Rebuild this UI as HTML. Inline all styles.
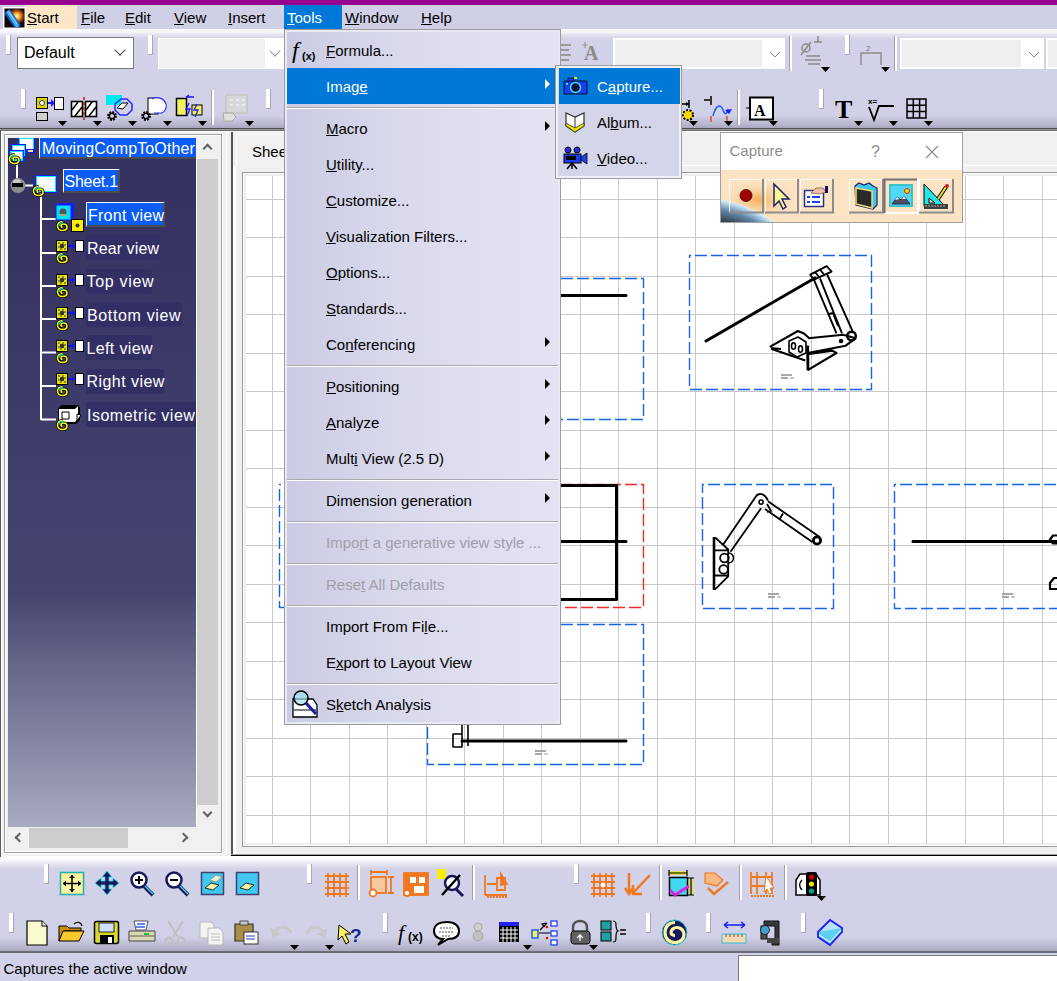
<!DOCTYPE html>
<html><head><meta charset="utf-8">
<style>
*{box-sizing:border-box;margin:0;padding:0}
html,body{width:1057px;height:981px;overflow:hidden;background:#d1d1e9;font-family:"Liberation Sans",sans-serif;position:relative}
.a{position:absolute}
#top{left:0;top:0;width:1057px;height:5px;background:#97008f}
#menubar{left:0;top:5px;width:1057px;height:24px;background:#cfcfe6;font-size:15px;color:#000}
#menubar span{position:absolute;top:4px}
u{text-decoration:underline;text-underline-offset:1px}
#tb{left:0;top:29px;width:1057px;height:99px;background:linear-gradient(#fcfcfe 0px,#f6f6fa 3px,#e2e2f0 6px,#d2d2e8 10px,#d0d0e7 86px,#b9b9d0 95px,#a7a7bd 99px)}
#tbline{left:0;top:128px;width:1057px;height:3px;background:linear-gradient(to bottom,#4c4c50 0px,#4c4c50 1px,#9a9a9a 1px,#9a9a9a 2px,#6a6a6a 2px,#6a6a6a 3px)}
#main{left:0;top:131px;width:1057px;height:726px;background:#f0f0f0}
#btb{left:0;top:856px;width:1057px;height:96px;background:linear-gradient(#ffffff 0px,#fcfcfe 3px,#e6e6f2 8px,#d2d2e8 13px,#d0d0e7 81px,#b9b9d0 90px,#a7a7bd 96px)}
#btbline{left:0;top:951px;width:1057px;height:2px;background:#6c6c78}
#status{left:0;top:953px;width:1057px;height:28px;background:#d1d1e9;font-size:15px}
.grip{position:absolute;width:5px;height:20px;background:#fff;border-right:1px solid #a0a0b8;border-bottom:1px solid #a0a0b8}
.combo{position:absolute;background:#fff;border:1px solid #7a7a7a}
.combo.dis{background:#f0f0f0;border:1px solid #fff}
.chev{position:absolute;width:8px;height:8px;border-right:1px solid #444;border-bottom:1px solid #444;transform:rotate(45deg)}
.dd{position:absolute;width:0;height:0;border-left:5px solid transparent;border-right:5px solid transparent;border-top:6px solid #000}
/* tree */
#tree{left:8px;top:138px;width:188px;height:689px;background:linear-gradient(#34305f 0px,#3f3d6c 300px,#46456f 455px,#6d6b8d 540px,#8c8ca8 620px,#aaaac2 689px);overflow:hidden}
.tl{position:absolute;color:#fff;font-size:16px;white-space:nowrap}
.tbox{position:absolute;background:#322f65;border-radius:3px}
.hl{position:absolute;background:#0a5cf4;border-top:1px solid #fff;border-left:1px solid #fff;border-right:2px solid #4c4c4c;border-bottom:2px solid #4c4c4c}
/* menu */
#menu{left:284px;top:29px;width:277px;height:696px;border:1px solid #9d9d9d;background:linear-gradient(90deg,#cacae3 0%,#d9d9ec 40%,#e3e3f2 100%);box-shadow:inset 0 0 0 2px #e9e9f3}
#menu .it{position:absolute;left:2px;width:271px;height:36px;font-size:15px;color:#000}
#menu .it span{position:absolute;left:39px;top:10px;white-space:nowrap}
#menu .it.sel{background:#0078d7;color:#fff}
#menu .it.dis{color:#9f9fa8}
#menu .sep{position:absolute;left:2px;width:271px;height:2px;border-top:1px solid #a8a8b0;border-bottom:1px solid #fff}
.arr{position:absolute;left:258px;top:11px;width:0;height:0;border-top:5px solid transparent;border-bottom:5px solid transparent;border-left:5px solid #000}
.sel .arr{border-left-color:#fff}
#sub{left:555px;top:65px;width:127px;height:114px;border:1px solid #9d9d9d;background:#d5d5ea;box-shadow:inset 0 0 0 2px #f0f0f6}
#sub .it{position:absolute;left:3px;width:121px;height:36px;font-size:15px}
#sub .it span{position:absolute;left:38px;top:10px}
#sub .it.sel{background:#0078d7;color:#fff}
</style></head><body>
<div id="top" class="a"></div>
<div id="menubar" class="a">
  <div class="a" style="left:25px;top:0;width:52px;height:24px;background:#fde6c6"></div>
  <svg class="a" style="left:3px;top:2px" width="23" height="22"><defs><radialGradient id="sg" cx="0.62" cy="0.4" r="0.45"><stop offset="0" stop-color="#fff8c0"/><stop offset="0.35" stop-color="#f8b030"/><stop offset="0.7" stop-color="#a04010"/><stop offset="1" stop-color="#100808"/></radialGradient></defs>
<rect x="0" y="0" width="23" height="22" fill="#fff"/><rect x="1.5" y="1.5" width="20" height="19" fill="#000"/><rect x="2" y="2" width="19" height="18" fill="url(#sg)"/><clipPath id="sc"><rect x="2" y="2" width="19" height="18"/></clipPath>
<g clip-path="url(#sc)"><path d="M4 4l11 16" stroke="#1a60d0" stroke-width="7" opacity="0.85"/><path d="M4.5 4l10.5 16" stroke="#40b0ff" stroke-width="3.5"/><path d="M6 5l8 12" stroke="#b0f0ff" stroke-width="1" opacity="0.8"/></g></svg>
  <span style="left:27px"><u>S</u>tart</span>
  <span style="left:81px"><u>F</u>ile</span>
  <span style="left:125px"><u>E</u>dit</span>
  <span style="left:174px"><u>V</u>iew</span>
  <span style="left:228px"><u>I</u>nsert</span>
  <div class="a" style="left:284px;top:0;width:58px;height:24px;background:#0078d7"></div>
  <span style="left:287px;color:#fff"><u>T</u>ools</span>
  <span style="left:345px"><u>W</u>indow</span>
  <span style="left:421px"><u>H</u>elp</span>
</div>
<div id="tb" class="a">
  <div class="combo" style="left:17px;top:8px;width:117px;height:32px"><span class="a" style="left:6px;top:5.5px;font-size:16px">Default</span><div class="chev" style="left:98px;top:8px"></div></div>
  <div class="combo dis" style="left:158px;top:9px;width:130px;height:31px;background:linear-gradient(90deg,#f0f0f0 106px,#fff 106px)"><div class="chev" style="left:112px;top:8px;border-color:#999"></div></div>
</div>
<div id="tbline" class="a"></div>
<div id="main" class="a">
</div>
<div id="btb" class="a"></div>
<div id="btbline" class="a"></div>
<div id="status" class="a">
  <span class="a" style="left:3.5px;top:7px">Captures the active window</span>
  <div class="a" style="left:738px;top:2px;width:320px;height:26px;background:#fff;border:1px solid #7a7a7a;border-right:none;border-bottom:none"></div>
</div>

<!-- toolbars -->
<svg class="a" style="left:0;top:0" width="1057" height="981">
<defs>
<g id="grip"><rect x="0" y="0" width="5" height="20" fill="#fff"/><rect x="4" y="0" width="1" height="20" fill="#a8a8bc"/><rect x="0" y="19" width="5" height="1" fill="#a8a8bc"/></g>
<path id="dd" d="M0 0h9l-4.5 5z" fill="#000"/>
<g id="ogrid" stroke="#f07820" stroke-width="1.8" fill="none"><path d="M1 4h24M1 10h24M1 16h24M1 22h24M4 1v24M10 1v24M16 1v24M22 1v24"/></g>
</defs>
<!-- top row 1 -->
<use href="#grip" x="6" y="35"/>
<use href="#grip" x="148" y="35"/>
<g stroke="#9a9a9a" stroke-width="2"><path d="M561 45h10M561 50h8M561 55h10M561 60h8"/></g>
<text x="584" y="60" font-family="Liberation Serif" font-weight="bold" font-size="20" fill="#8a8a8a">A</text>
<path d="M585 42v6M582 45h6" stroke="#9a9a9a" stroke-width="1.2"/>
<rect x="613.5" y="38.5" width="171" height="30" fill="#fff" stroke="#fff"/><rect x="615" y="40" width="147" height="27" fill="#efefef"/>
<path d="M770 52l5 5 5-5" stroke="#8a8a8a" fill="none"/>
<rect x="790" y="36" width="2" height="35" fill="#fff"/><rect x="789" y="36" width="1" height="35" fill="#a0a0b0"/>
<g stroke="#8a8a8a" stroke-width="1.5" fill="none"><circle cx="806" cy="48" r="4"/><path d="M801 55l10-13M814 42h8M818 36v6M806 56h14M805 60h16M808 64h12"/></g>
<use href="#dd" x="821" y="67"/>
<use href="#grip" x="845" y="35"/>
<g stroke="#8a8a8a" stroke-width="1.5" fill="none"><path d="M861 65V53h20v12M863 53h16"/></g>
<text x="866" y="51" font-family="Liberation Sans" font-size="8" fill="#7a7a7a">2</text>
<use href="#dd" x="881" y="67"/>
<rect x="895" y="36" width="2" height="35" fill="#fff"/><rect x="894" y="36" width="1" height="35" fill="#a0a0b0"/>
<rect x="900.5" y="38.5" width="143" height="30" fill="#fff" stroke="#fff"/><rect x="902" y="40" width="119" height="27" fill="#efefef"/>
<path d="M1029 52l5 5 5-5" stroke="#8a8a8a" fill="none"/>
<rect x="1046.5" y="38.5" width="20" height="30" fill="#fff" stroke="#fff"/><rect x="1048" y="40" width="12" height="27" fill="#efefef"/>
<!-- top row 2 -->
<use href="#grip" x="21" y="89"/>
<rect x="36" y="97" width="12" height="12" fill="#000"/><rect x="37" y="98" width="10" height="10" fill="#d8d800"/><circle cx="42" cy="103" r="2.5" fill="#fff" stroke="#333"/>
<path d="M48 102h3v-3l4 4-4 4v-3h-3z" fill="#1a1aff"/><rect x="54.5" y="97.5" width="9" height="12" fill="#fff" stroke="#000"/>
<rect x="36.5" y="112.5" width="11" height="8" fill="#d0d0d0" stroke="#000"/>
<use href="#dd" x="58" y="121"/>
<rect x="71.5" y="101.5" width="11" height="15" fill="#fff" stroke="#000" stroke-width="1.6"/><rect x="85.5" y="101.5" width="11" height="15" fill="#fff" stroke="#000" stroke-width="1.6"/>
<path d="M72 110l6-8M75 116l7-9M86 110l6-8M89 116l7-9" stroke="#000" stroke-width="1.5"/>
<path d="M84 97v24" stroke="#c02020" stroke-width="1.5" stroke-dasharray="3 2"/>
<use href="#dd" x="93" y="121"/>
<rect x="106" y="95" width="16" height="10" fill="#00e8f0"/>
<path d="M121 99l6 0 5 5v6l-5 5h-7l-5-5v-6z" fill="none" stroke="#2828ff" stroke-width="1.5"/>
<path d="M117 108l5-5h6l-5 6z" fill="#fff" stroke="#000"/>
<circle cx="112" cy="116" r="3.6" fill="none" stroke="#000" stroke-width="2.6" stroke-dasharray="1.8 1"/><circle cx="112" cy="116" r="2.6" fill="none" stroke="#000" stroke-width="1.2"/>
<use href="#dd" x="128" y="121"/>
<rect x="148" y="98" width="10" height="16" fill="#fff" stroke="#000"/><path d="M152 99a9 8 0 0 1 10 14h-8" fill="#fff" stroke="#2828ff" stroke-width="1.2"/>
<circle cx="146" cy="116" r="3.6" fill="none" stroke="#000" stroke-width="2.6" stroke-dasharray="1.8 1"/><circle cx="146" cy="116" r="2.6" fill="none" stroke="#000" stroke-width="1.2"/>
<use href="#dd" x="163" y="121"/>
<rect x="176.5" y="98.5" width="10" height="17" fill="#f0f060" stroke="#000" stroke-width="1.5"/><rect x="192" y="105" width="10" height="10" fill="#f0f060" stroke="#000"/>
<path d="M186 97h8M186 97l3-2M189 103l-3 6 4 0-3 7M197 104l-3 6 4 0-3 7" stroke="#1a1aff" stroke-width="1.3" fill="none"/>
<use href="#dd" x="198" y="121"/>
<rect x="212" y="90" width="2" height="35" fill="#fff"/><rect x="211" y="90" width="1" height="35" fill="#a0a0b0"/>
<rect x="226" y="95" width="21" height="18" fill="#d8d8d8" stroke="#bcbcbc"/><path d="M230 100h3M236 100h3M242 100h3M230 105h3M236 105h3M242 105h3" stroke="#fff"/>
<path d="M223 113h10l3 4-4 4h-8z" fill="#e0e0e0" stroke="#a8a8a8"/>
<use href="#dd" x="245" y="121"/>
<use href="#grip" x="266" y="89"/>
<circle cx="688" cy="115" r="5" fill="#f8d800" stroke="#000" stroke-dasharray="2 1.5" stroke-width="2"/><path d="M682 104h7M689 100v8" stroke="#000" stroke-width="1.5"/><path d="M686 102l3 2-3 2" fill="#000"/>
<use href="#dd" x="689" y="121"/>
<path d="M704 100h6M711 96v9" stroke="#000" stroke-width="1.5"/>
<path d="M713 116c3-12 8-12 10-6s4 4 5 -1" stroke="#1a60ff" stroke-width="1.5" fill="none"/><path d="M725 110l4 4 3-5z" fill="#1a1aff"/>
<path d="M711 116v6M727 116v6" stroke="#f04040" stroke-width="1.5"/>
<use href="#dd" x="724" y="121"/>
<rect x="738" y="90" width="2" height="35" fill="#fff"/><rect x="737" y="90" width="1" height="35" fill="#a0a0b0"/>
<rect x="750" y="97.5" width="23" height="22" fill="#fff" stroke="#000" stroke-width="2"/><path d="M746 108h4" stroke="#000"/>
<text x="754" y="116" font-family="Liberation Serif" font-weight="bold" font-size="16" fill="#000">A</text>
<use href="#dd" x="769" y="121"/>
<use href="#grip" x="819" y="89"/>
<text x="835" y="118" font-family="Liberation Serif" font-weight="bold" font-size="26" fill="#000">T</text>
<use href="#dd" x="854" y="121"/>
<path d="M869 107l5 13 5-14h15" stroke="#000" stroke-width="1.8" fill="none"/><text x="868" y="104" font-family="Liberation Sans" font-weight="bold" font-size="8">x=</text>
<use href="#dd" x="889" y="121"/>
<g stroke="#000" stroke-width="1.5" fill="none"><rect x="907" y="99" width="19" height="19"/><path d="M907 105.3h19M907 111.6h19M913.3 99v19M919.6 99v19"/></g>
<use href="#dd" x="924" y="121"/>

<!-- bottom row 1 -->
<use href="#grip" x="44" y="864"/>
<rect x="60.5" y="872.5" width="23" height="22" fill="#f8f4a0" stroke="#20b0b0" stroke-width="1.5"/>
<path d="M72 875v17M63 883.5h18" stroke="#000" stroke-width="1.5"/><path d="M69 878l3-3 3 3zM69 889l3 3 3-3zM66 880.5l-3 3 3 3zM78 880.5l3 3-3 3z" fill="#000"/>
<path d="M107 871l5 6h-3v4h4v-3l6 5-6 5v-3h-4v4h3l-5 6-5-6h3v-4h-4v3l-6-5 6-5v3h4v-4h-3z" fill="#18185a" stroke="#30e0f0" stroke-width="0.8"/>
<circle cx="139" cy="880" r="7.5" fill="#fff" stroke="#18185a" stroke-width="2.5"/><path d="M139 876v8M135 880h8" stroke="#000" stroke-width="2"/><path d="M144 886l9 9" stroke="#18185a" stroke-width="4"/><path d="M145 886l8 8" stroke="#40d0e0" stroke-width="1.5"/>
<circle cx="174" cy="880" r="7.5" fill="#fff" stroke="#18185a" stroke-width="2.5"/><path d="M170 880h8" stroke="#000" stroke-width="2"/><path d="M179 886l9 9" stroke="#18185a" stroke-width="4"/><path d="M180 886l8 8" stroke="#40d0e0" stroke-width="1.5"/>
<rect x="201.5" y="872.5" width="22" height="22" fill="#40c8f0" stroke="#404070" stroke-width="1.5"/><path d="M205 888l6-5 8 2-6 5z" fill="#f8f4b0" stroke="#000" stroke-width="0.8"/><path d="M210 880l6-5 6 2-6 5z" fill="#f0f0d0" stroke="#888" stroke-width="0.8"/>
<rect x="236.5" y="872.5" width="22" height="22" fill="#40c8f0" stroke="#404070" stroke-width="1.5"/><path d="M240 888l6-5 8 2-6 5z" fill="#f8f4b0" stroke="#000" stroke-width="0.8"/>
<use href="#grip" x="307" y="864"/>
<use href="#ogrid" x="324" y="872"/>
<rect x="358" y="865" width="2" height="35" fill="#fff"/><rect x="357" y="865" width="1" height="35" fill="#a0a0b0"/>
<g stroke="#f07820" stroke-width="1.8" fill="none"><path d="M371 872h16M371 870v5M387 870v5M391 877v16M388 877h6M388 893h6"/><rect x="371" y="877" width="15" height="16" fill="#f8c8a0"/><circle cx="373" cy="893" r="3.5" fill="#fff"/></g>
<g stroke="#f07820" stroke-width="1.8"><rect x="404" y="873" width="24" height="22" fill="#f07820"/><rect x="410" y="877" width="6" height="6" fill="#fff" stroke="none"/><rect x="419" y="877" width="6" height="6" fill="#fff" stroke="none"/><rect x="414" y="886" width="10" height="7" fill="#fff" stroke="none"/><circle cx="407" cy="893" r="3" fill="#fff"/></g>
<rect x="437" y="869" width="9" height="10" fill="#f8f000"/><circle cx="452" cy="883" r="7" fill="#fff" stroke="#18185a" stroke-width="2.5"/><path d="M456 889l7 7" stroke="#18185a" stroke-width="3"/><path d="M442 895l18-20" stroke="#000" stroke-width="2.5"/>
<rect x="473" y="865" width="2" height="35" fill="#fff"/><rect x="472" y="865" width="1" height="35" fill="#a0a0b0"/>
<g stroke="#f07820" stroke-width="1.8" fill="none"><path d="M485 875v20M485 895h22M487 884h10M497 878h8v12h-8z"/><path d="M501 874l6 10-6 1z" fill="#f07820"/><path d="M487 897h20" stroke-dasharray="2 1"/></g>
<use href="#grip" x="574" y="864"/>
<use href="#ogrid" x="590" y="872"/><circle cx="603" cy="885" r="3" fill="#fff" stroke="#f07820"/>
<g stroke="#f07820" stroke-width="2.5" fill="none"><path d="M629 873v20M625 888l4 6 4-6M650 875l-17 18M633 885v9h9"/></g>
<rect x="660" y="865" width="2" height="35" fill="#fff"/><rect x="659" y="865" width="1" height="35" fill="#a0a0b0"/>
<rect x="669.5" y="877.5" width="18" height="18" fill="#40d8f0" stroke="#000" stroke-width="1.5"/><path d="M669 873h18M691 878v17" stroke="#e8e800" stroke-width="3"/><path d="M669 873h18M691 878v17M669 870v6M687 870v6M688 878h6M688 895h6" stroke="#000" stroke-width="1.2"/>
<path d="M670 890l5 5 14-9" stroke="#e020e0" stroke-width="2.8" fill="none"/>
<g stroke="#f07820" stroke-width="2.5" fill="none"><path d="M708 888l6 6 14-12"/></g><path d="M705 873h10l8 7-6 6-12-3z" fill="#f8b880" stroke="#f07820" stroke-width="1.2"/>
<rect x="740" y="865" width="2" height="35" fill="#fff"/><rect x="739" y="865" width="1" height="35" fill="#a0a0b0"/>
<g stroke="#f07820" stroke-width="1.8" fill="none"><path d="M751 872v22M772 872v22M751 877h21M751 886h21M757 872v22M766 872v22"/><path d="M751 896h24" stroke-dasharray="2 1"/></g><path d="M766 876l8 12-4 0 2 5-3 1-2-5-3 3z" fill="#fff" stroke="#f07820"/>
<rect x="785" y="865" width="2" height="35" fill="#fff"/><rect x="784" y="865" width="1" height="35" fill="#a0a0b0"/>
<path d="M796 880l4-6h16l4 6v15h-24z" fill="#fff" stroke="#000" stroke-width="1.5"/><rect x="806" y="872" width="11" height="24" rx="2" fill="#000"/>
<circle cx="811.5" cy="877" r="2.6" fill="#d00000"/><circle cx="811.5" cy="884" r="2.6" fill="#f0e000"/><circle cx="811.5" cy="891" r="2.6" fill="#00a0a0"/><path d="M802 880c-3 3-3 7 0 10" stroke="#000" stroke-width="1.5" fill="none"/>
<use href="#dd" x="817" y="896"/>

<!-- bottom row 2 -->
<use href="#grip" x="9" y="913"/>
<path d="M27 921h15l5 5v19H27z" fill="#fafad0" stroke="#000" stroke-width="1.2"/><path d="M42 921v5h5" fill="#fff" stroke="#000"/>
<path d="M59 926h8l2 2h12v3H64l-5 10z" fill="#c89010" stroke="#000" stroke-width="1"/><path d="M63 931h21l-5 10H59z" fill="#f8c830" stroke="#000" stroke-width="1"/><path d="M74 924c3-3 7-2 8 2" stroke="#000" fill="none" stroke-width="1.2"/>
<rect x="94.5" y="921.5" width="24" height="22" rx="2" fill="#d8d830" stroke="#000" stroke-width="1.5"/><rect x="99" y="923" width="15" height="9" fill="#d0e0f8" stroke="#000" stroke-width="0.8"/><rect x="100" y="935" width="14" height="9" fill="#000"/><rect x="108" y="937" width="4" height="6" fill="#fff"/>
<path d="M134 921h14l-2 9h-10z" fill="#fff" stroke="#555"/><path d="M137 924h8M136 927h9" stroke="#3060f0" stroke-width="1.5"/><path d="M129 931h26v10h-26z" fill="#d8d8b8" stroke="#444"/><path d="M130 936h24" stroke="#606040"/><rect x="144" y="933" width="5" height="2" fill="#20c040"/>
<g stroke="#c0c0c0" stroke-width="1.8" fill="none"><path d="M168 921l10 16M183 921l-10 16"/><circle cx="169" cy="941" r="3.5"/><circle cx="181" cy="941" r="3.5"/></g>
<path d="M200 922h11l3 3v13h-14z" fill="#f4f4f4" stroke="#b8b8b8"/><path d="M208 928h11l4 4v13h-15z" fill="#f4f4f4" stroke="#b8b8b8"/><path d="M211 934h9M211 937h9M211 940h9" stroke="#c0c0c0"/>
<path d="M235 924h18v17h-18z" fill="#a89048" stroke="#333" stroke-width="1.2"/><rect x="240" y="921" width="8" height="4" fill="#c8c8c8" stroke="#333" stroke-width="0.8"/><rect x="244" y="932" width="14" height="12" fill="#fff" stroke="#333"/><path d="M246 936h9M246 939h9" stroke="#2040d0" stroke-width="1.2"/>
<path d="M274 936c0-10 14-12 17-3" stroke="#c8c8c8" stroke-width="3" fill="none"/><path d="M270 928l3 10 8-4z" fill="#c8c8c8"/>
<use href="#dd" x="290" y="945"/>
<path d="M324 936c0-10-14-12-17-3" stroke="#c8c8c8" stroke-width="3" fill="none"/><path d="M328 928l-3 10-8-4z" fill="#c8c8c8"/>
<use href="#dd" x="325" y="945"/>
<path d="M339 925l12 9h-6l4 8-3 2-4-8-4 4z" fill="#f8f060" stroke="#000"/><text x="350" y="942" font-family="Liberation Sans" font-weight="bold" font-size="19" fill="#1a2890">?</text>
<use href="#grip" x="383" y="913"/>
<text x="398" y="940" font-family="Liberation Serif" font-style="italic" font-size="22" fill="#000">f</text><text x="408" y="941" font-family="Liberation Sans" font-weight="bold" font-size="12" fill="#000">(x)</text>
<path d="M447 922c-9 0-13 4-13 9s4 8 9 8l-5 6 10-6c8 0 11-3 11-8s-4-9-12-9z" fill="#fff" stroke="#000" stroke-width="2"/><path d="M440 928h13M439 932h14M442 936h9" stroke="#555" stroke-dasharray="2 1"/>
<circle cx="478" cy="927" r="4" fill="#d0d0d0" stroke="#aaa"/><circle cx="478" cy="936" r="5" fill="#c0c0c0" stroke="#aaa"/>
<rect x="499" y="922" width="20" height="4" fill="#2020f0"/><rect x="499" y="926" width="20" height="16" fill="#000"/><path d="M500 930h18M500 934h18M500 938h18M503 927v15M507 927v15M511 927v15M515 927v15" stroke="#fff" stroke-width="1"/>
<use href="#dd" x="523" y="945"/>
<rect x="532" y="930" width="6" height="8" fill="#f0f060" stroke="#2060f0" stroke-width="1.5"/><g fill="#fff" stroke="#2040f0" stroke-width="1.3"><rect x="551" y="921" width="6" height="5"/><rect x="551" y="931" width="6" height="5"/><rect x="551" y="940" width="6" height="5"/></g><path d="M539 933h11M540 930l7-7M546 923l-4 1 3 3" stroke="#000" stroke-width="1.2" fill="none"/><circle cx="547" cy="927" r="1.2" fill="#e00"/><circle cx="547" cy="938" r="1.2" fill="#e00"/>
<path d="M573 931v-4c0-8 14-8 14 0v4" stroke="#505050" stroke-width="2.5" fill="none"/><rect x="571" y="931" width="19" height="13" rx="3" fill="#606060" stroke="#000"/><path d="M580 935v6M577 938l3-3 3 3" stroke="#fff" stroke-width="1.3" fill="none"/>
<use href="#dd" x="589" y="945"/>
<rect x="601" y="921" width="10" height="9" fill="#20a0a0" stroke="#000"/><rect x="601" y="932" width="10" height="9" fill="#20a0a0" stroke="#000"/><path d="M613 921c3 0 3 2 3 5s2 5 2 5-2 0-2 5 0 6-3 6" stroke="#000" fill="none" stroke-width="1.2"/><path d="M620 930h6M620 934h6" stroke="#000" stroke-width="1.5"/>
<use href="#grip" x="646" y="913"/>
<circle cx="674.5" cy="932.5" r="12.5" fill="#18185a"/><path d="M675 922.5c-6 0-10 4-10 10s4 10 10 10 9-4 9-8-3-7-7-7-6 3-6 5 2 3 4 3" stroke="#f8f4a0" stroke-width="3.2" fill="none"/><circle cx="674.5" cy="932.5" r="12.5" fill="none" stroke="#30c8d8" stroke-width="1"/>
<use href="#grip" x="706" y="913"/>
<path d="M724 925h21M724 925l4-3M724 925l4 3M745 925l-4-3M745 925l-4 3" stroke="#1a1aff" stroke-width="1.5" fill="none"/><rect x="722" y="934" width="24" height="9" fill="#f8d8b0" stroke="#30c0e0"/><path d="M726 934v3M730 934v3M734 934v3M738 934v3M742 934v3" stroke="#555"/>
<path d="M764 921h15v24h-7v-5h3v-14h-11z" fill="#383838" stroke="#111"/><rect x="761" y="926" width="6" height="13" fill="#505050" stroke="#111"/><circle cx="765" cy="930" r="4.5" fill="#40a0d0" stroke="#222"/><path d="M767 938h12v5h-12z" fill="#444"/>
<use href="#grip" x="801" y="913"/>
<path d="M818 932l12-12 12 8-12 14z" fill="#b8e0ff" stroke="#2020f0" stroke-width="1.8"/><path d="M818 932v5l12 8 12-13v-4" fill="#60d0f0" stroke="#2020f0" stroke-width="1.8"/><path d="M819 935l11 7 11-12" stroke="#fff" fill="none"/>
</svg>

<!-- right panel -->
<div class="a" style="left:231px;top:132px;width:2px;height:723px;background:#555"></div><div class="a" style="left:226px;top:131px;width:1px;height:724px;background:#fff"></div><div class="a" style="left:222px;top:134px;width:1px;height:720px;background:#fff"></div><div class="a" style="left:0;top:131px;width:233px;height:1px;background:#fff"></div>
<div class="a" style="left:231px;top:854px;width:826px;height:1px;background:#a0a0a0"></div><div class="a" style="left:231px;top:855px;width:826px;height:1px;background:#000"></div>
<div class="a" style="left:233px;top:166px;width:3px;height:688px;background:#fff"></div><div class="a" style="left:300px;top:165px;width:757px;height:1px;background:#fff"></div><div class="a" style="left:234px;top:131px;width:823px;height:1px;background:#fff"></div>
<div class="a" style="left:236px;top:134px;width:100px;height:32px;border-top:1px solid #fff;border-left:1px solid #fff"></div>
<span class="a" style="left:252px;top:143px;font-size:15px">Sheet.1</span>
<div class="a" style="left:242px;top:172px;width:820px;height:675px;border:1px solid #989898;background:#fff;box-shadow:inset 0 0 0 1px #fff,inset 0 0 0 3px #efefef"></div>
<svg class="a" style="left:0;top:0" width="1057" height="981">
<defs><clipPath id="cv"><rect x="246" y="176" width="811" height="668"/></clipPath></defs>
<g clip-path="url(#cv)">
<path d="M272.5 176V844M310.5 176V844M349.5 176V844M387.5 176V844M426.5 176V844M464.5 176V844M503.5 176V844M541.5 176V844M580.5 176V844M618.5 176V844M657.5 176V844M695.5 176V844M734.5 176V844M772.5 176V844M811.5 176V844M849.5 176V844M888.5 176V844M926.5 176V844M965.5 176V844M1003.5 176V844M1042.5 176V844M246 199.5H1057M246 237.5H1057M246 276.5H1057M246 314.5H1057M246 353.5H1057M246 391.5H1057M246 430.5H1057M246 468.5H1057M246 507.5H1057M246 545.5H1057M246 584.5H1057M246 622.5H1057M246 661.5H1057M246 699.5H1057M246 738.5H1057M246 776.5H1057M246 815.5H1057" stroke="#c9c9c9" stroke-width="1" fill="none"/>
<g fill="none" stroke-width="1.4" stroke-dasharray="12 4" stroke-dashoffset="10.5">
<rect x="427.5" y="278.5" width="216" height="141" stroke="#1464f0"/>
<rect x="279.5" y="484.5" width="200" height="123" stroke="#1464f0"/>
<rect x="427.5" y="484.5" width="216" height="123" stroke="#ee2a2a"/>
<rect x="427.5" y="624.5" width="216" height="140" stroke="#1464f0"/>
<rect x="689.5" y="255.5" width="182" height="134" stroke="#1464f0"/>
<rect x="702.5" y="484.5" width="131" height="124" stroke="#1464f0"/>
<rect x="894.5" y="484.5" width="200" height="124" stroke="#1464f0"/>
</g>
<g fill="none" stroke="#000" stroke-width="3" stroke-linecap="round" stroke-linejoin="round">
<path d="M470 295.5H626"/>
<path d="M470 485.5H616.5V599.5H470M470 541.5H626"/>
<path d="M462 741H626"/>
<path d="M706 341L815 278"/>
<path d="M913 541.5H1057"/>
<path d="M1057 535.5h-4l-3 4 3 4h4 M1057 578h-3l-4 5v6h7" stroke-width="2.2"/>
</g>
<g fill="none" stroke="#000" stroke-width="1.6" stroke-linejoin="round">
<path d="M453 734h9v13h-9z M462 722v24 M468 722v24"/>
<!-- iso arm -->
<path d="M810.2 274.7L826.7 266.1 831.6 271.6 813.9 279.6Z M815 272l4 5 M820 269.5l4 5" stroke-width="1.9"/>
<path d="M813.9 279.6L836.5 333.4 M820 278.4L842 333.4 M826.7 273.5L853 332.2 M829 314l4 -1 5 13" stroke-width="1.9"/>
<circle cx="851.5" cy="336" r="4.3" stroke-width="2.4"/>
<path d="M769.8 346.9L797.9 331 804 333.5 809 338 M771 348.7L805.3 360.4 M807.7 345.7L808 370.2 M807.7 370.2L836.5 353 832.2 350.6 807.7 354.2 M808.3 338.3L843.2 334.7 855.5 338.3 845.7 345.7 807.7 353 M771 348l10 1" stroke-width="2.1"/>
<path d="M807.7 345.7L808 370.2" stroke-width="2.8"/>
<path d="M789 341l9-4 8 5v11l-9 4-8-5z" stroke-width="1.6"/><ellipse cx="793.5" cy="346" rx="2" ry="3.3" stroke-width="1.6"/><ellipse cx="800.5" cy="349" rx="2" ry="3.3" stroke-width="1.6"/>
<circle cx="841" cy="341" r="1.5" fill="#000"/>
<!-- right view arm -->
<path d="M714 537v53" stroke-width="2.6"/>
<path d="M715 537.3L728.2 549.5V576.3L715 589.3 M715 550.3h13 M715 575.5h13" stroke-width="1.8"/>
<circle cx="724.4" cy="558" r="4.3" stroke-width="1.8"/><circle cx="723.6" cy="569.4" r="4.3" stroke-width="1.8"/>
<path d="M728.5 553a5 5 0 0 1 0 10" stroke-width="1.5"/>
<path d="M722.9 544.9L755.7 496.8C758 493 764 492 768 500.6 M730.5 551.8L761.1 508.2" stroke-width="1.8"/>
<circle cx="761.1" cy="502.1" r="2.1" stroke-width="1.6"/>
<path d="M768 501.3L820 537.3 M765 509L812.3 541.9 M767 504l4 7-4 1 M783 513.5l-4 6.5" stroke-width="1.8"/>
<circle cx="817" cy="540.5" r="3.6" stroke-width="2.8"/>
</g>
<g fill="#a8a8a8"><rect x="781" y="374" width="11" height="2"/><rect x="781" y="377" width="7" height="2"/><rect x="790" y="377" width="4" height="2" fill="#ccc"/><rect x="768" y="593" width="11" height="2"/><rect x="768" y="596" width="7" height="2"/><rect x="777" y="596" width="4" height="2" fill="#ccc"/><rect x="1002" y="593" width="11" height="2"/><rect x="1002" y="596" width="7" height="2"/><rect x="1011" y="596" width="4" height="2" fill="#ccc"/><rect x="535" y="750" width="11" height="2"/><rect x="535" y="753" width="7" height="2"/><rect x="544" y="753" width="4" height="2" fill="#ccc"/></g>
</g>
</svg>

<!-- tree panel -->
<div class="a" style="left:0;top:130px;width:1px;height:727px;background:#5a5a5a"></div>
<div class="a" style="left:1px;top:131px;width:1px;height:726px;background:#fff"></div>
<div class="a" style="left:4px;top:134px;width:218px;height:719px;border:1px solid #a0a0a0"></div>
<div class="a" style="left:5px;top:135px;width:216px;height:717px;border:1px solid #fff;border-right:none"></div>
<div class="a" style="left:4px;top:853px;width:219px;height:1px;background:#fff"></div>
<div id="tree" class="a">
<svg class="a" style="left:0;top:0" width="188" height="689" viewBox="8 138 188 689">
<defs>
<g id="sw"><path d="M6.5 1.5c-3 0-5 2-5 4.5s2 4.5 5 4.5 4.5-1.5 4.5-3.5-1.5-3-3.5-3-2.5 1-2.5 2 .8 1.5 1.5 1.5" fill="none" stroke="#000" stroke-width="3.2"/><path d="M6.5 1.5c-3 0-5 2-5 4.5s2 4.5 5 4.5 4.5-1.5 4.5-3.5-1.5-3-3.5-3-2.5 1-2.5 2 .8 1.5 1.5 1.5" fill="none" stroke="#ffff00" stroke-width="1.6"/><path d="M3 5.5c.5-2 2-3 4-3" stroke="#00c8d8" stroke-width="1.4" fill="none"/></g>
<g id="vw"><rect x="0" y="0" width="12" height="12" fill="#000"/><rect x="1" y="1" width="10" height="10" fill="#e6e600"/><path d="M2 2h2v2H2zM6 2h2v2H6zM4 4h2v2H4zM8 4h2v2H8zM2 6h2v2H2zM6 6h2v2H6zM4 8h2v2H4zM8 8h2v2H8z" fill="#8a8a20"/><circle cx="6" cy="6" r="2.2" fill="#333"/><path d="M12 5h4v-2l3 3-3 3v-2h-4z" fill="#1010ff"/><rect x="19" y="0" width="9" height="12" fill="#000"/><rect x="20" y="1" width="7" height="10" fill="#fff"/></g>
</defs>
<path d="M17 162v16M25 185.5h8M41 193v227M41 219h15M41 253h15M41 286h15M41 319h15M41 352.5h15M41 386h15M41 419.5h15" stroke="#fff" stroke-width="2" fill="none"/>
<!-- root icon -->
<rect x="18" y="138" width="17" height="15" fill="#1a1aff"/><rect x="19" y="138" width="15" height="13" fill="#00e8ff"/><rect x="20" y="139" width="13" height="10" fill="#fff"/><rect x="26" y="149" width="8" height="4" fill="#1a1aff"/><rect x="28" y="150" width="5" height="2" fill="#ffe070"/>
<rect x="11" y="144" width="15" height="13" fill="#1a1aff"/><rect x="12" y="145" width="13" height="11" fill="#00e8ff"/><rect x="13" y="146" width="11" height="8" fill="#fff"/>
<rect x="9" y="150" width="15" height="12" fill="#1a1aff"/><rect x="10" y="151" width="13" height="10" fill="#00e8ff"/><rect x="12" y="152" width="10" height="7" fill="#fff"/>
<use href="#sw" x="8" y="153"/>
<!-- minus ball -->
<circle cx="18" cy="185.5" r="7.5" fill="#8c8c8c"/><circle cx="17" cy="183" r="4" fill="#c8c8c8"/><rect x="12" y="183" width="11" height="4" fill="#000"/>
<!-- sheet icon -->
<rect x="35" y="175" width="22" height="18" fill="#1a1aff"/><rect x="36" y="176" width="20" height="16" fill="#00e8ff"/><rect x="37" y="177" width="18" height="14" fill="#fff"/>
<use href="#sw" x="32" y="185"/>
<!-- front icon -->
<rect x="58" y="203" width="16" height="15" fill="#1a1aff"/><rect x="56" y="205" width="15" height="15" fill="#00e0ff" stroke="#1a1aff" stroke-width="1"/><circle cx="63" cy="212" r="3.5" fill="#555"/><path d="M60 214h6v2h-6z" fill="#b0a080"/>
<use href="#sw" x="56" y="220"/>
<rect x="71" y="219" width="13" height="13" fill="#000"/><rect x="72" y="220" width="11" height="11" fill="#f8f000"/><circle cx="77.5" cy="225.5" r="2" fill="#333"/>
<use href="#vw" x="56" y="240"/><use href="#sw" x="56" y="252"/>
<use href="#vw" x="56" y="274"/><use href="#sw" x="56" y="286"/>
<use href="#vw" x="56" y="307"/><use href="#sw" x="56" y="319"/>
<use href="#vw" x="56" y="340"/><use href="#sw" x="56" y="352"/>
<use href="#vw" x="56" y="373"/><use href="#sw" x="56" y="385"/>
<!-- iso icon -->
<path d="M58 408l4-3h16l2 3v12l-4 4H58z" fill="#000"/><path d="M59 409h16v13H59z" fill="#fff"/><path d="M75 409l3-3v13l-3 3z" fill="#fff"/><path d="M62 412h7v7h-7z" fill="none" stroke="#000"/>
<path d="M77 414l4 1-4 6z" fill="#fff" stroke="#000" stroke-width="1"/>
<use href="#sw" x="56" y="419"/>
</svg>
<div class="tbox" style="left:78px;top:97px;width:74px;height:25px"></div>
<div class="tbox" style="left:78px;top:131px;width:66px;height:25px"></div>
<div class="tbox" style="left:78px;top:164px;width:96px;height:25px"></div>
<div class="tbox" style="left:78px;top:197px;width:66px;height:25px"></div>
<div class="tbox" style="left:78px;top:231px;width:78px;height:25px"></div>
<div class="tbox" style="left:78px;top:264px;width:112px;height:25px"></div>
<div class="hl" style="left:31px;top:-2px;width:160px;height:23px"></div>
<div class="hl" style="left:55px;top:31px;width:57px;height:24px"></div>
<div class="hl" style="left:78px;top:64px;width:79px;height:25px"></div>
<span class="tl" style="left:34px;top:1.5px;letter-spacing:0.1px">MovingCompToOther</span>
<span class="tl" style="left:56.5px;top:35px;letter-spacing:-0.25px">Sheet.1</span>
<span class="tl" style="left:80px;top:69px;letter-spacing:0.25px">Front view</span>
<span class="tl" style="left:79px;top:101.5px;letter-spacing:0.1px">Rear view</span>
<span class="tl" style="left:78.5px;top:134.5px;letter-spacing:0.7px">Top view</span>
<span class="tl" style="left:79px;top:168.5px;letter-spacing:0.65px">Bottom view</span>
<span class="tl" style="left:78.5px;top:202px;letter-spacing:0.35px">Left view</span>
<span class="tl" style="left:78.5px;top:235px;letter-spacing:0.45px">Right view</span>
<span class="tl" style="left:79px;top:269px;letter-spacing:0.5px">Isometric view</span>
</div>
<!-- tree scrollbars -->
<div class="a" style="left:196px;top:138px;width:1px;height:689px;background:#fff"></div>
<div class="a" style="left:197px;top:138px;width:21px;height:689px;background:#f0f0f0"></div>
<div class="a" style="left:197px;top:159px;width:21px;height:646px;background:#cdcdcd"></div>
<div class="chev" style="left:204px;top:145px;transform:rotate(-135deg);border-color:#606060;width:7px;height:7px;border-width:2px"></div>
<div class="chev" style="left:204px;top:809px;border-color:#606060;width:7px;height:7px;border-width:2px"></div>
<div class="a" style="left:8px;top:827px;width:210px;height:21px;background:#f0f0f0"></div>
<div class="a" style="left:29px;top:828px;width:99px;height:20px;background:#cdcdcd"></div>
<div class="chev" style="left:16px;top:834px;transform:rotate(135deg);border-color:#606060;width:7px;height:7px;border-width:2px"></div>
<div class="chev" style="left:180px;top:834px;transform:rotate(-45deg);border-color:#606060;width:7px;height:7px;border-width:2px"></div>

<!-- capture dialog -->
<div class="a" style="left:720px;top:132px;width:243px;height:91px;border:1px solid #a0a0a0;background:#fbe3c3;overflow:hidden">
  <div class="a" style="left:0;top:0;width:241px;height:37px;background:#fff"></div>
  <span class="a" style="left:8.5px;top:9px;font-size:15px;color:#8c8c8c">Capture</span>
  <span class="a" style="left:150px;top:10px;font-size:16px;color:#8c8c8c">?</span>
  <svg class="a" style="left:204px;top:12px" width="14" height="14"><path d="M1 1L13 13M13 1L1 13" stroke="#8c8c8c" stroke-width="1.2"/></svg>
  <svg class="a" style="left:0;top:37px" width="241" height="53">
    <defs><radialGradient id="ea" cx="0.5" cy="0.5" r="0.5"><stop offset="0" stop-color="#181820"/><stop offset="0.8" stop-color="#282830"/><stop offset="0.92" stop-color="#6088a8"/><stop offset="0.98" stop-color="#b8d8ec"/><stop offset="1" stop-color="#e0f0f8"/></radialGradient>
    <radialGradient id="glow" cx="0.5" cy="0.5" r="0.5"><stop offset="0" stop-color="#f6a848" stop-opacity="0.9"/><stop offset="1" stop-color="#fbe3c3" stop-opacity="0"/></radialGradient></defs>
    <ellipse cx="38" cy="30" rx="40" ry="22" fill="url(#glow)"/>
    <circle cx="-20" cy="150" r="122" fill="url(#ea)"/>
  </svg>
</div>
<svg class="a" style="left:0;top:0;pointer-events:none" width="1057" height="981">
  <g fill="none">
    <path d="M729.5 213V179.5H762" stroke="#fff"/><path d="M729 212.5h34V179" stroke="#8c8c8c" stroke-width="2"/>
    <path d="M765.5 213V179.5H797" stroke="#fff"/><path d="M765 212.5h33V179" stroke="#8c8c8c" stroke-width="2"/>
    <path d="M800.5 213V179.5H832" stroke="#fff"/><path d="M800 212.5h33V179" stroke="#8c8c8c" stroke-width="2"/>
    <path d="M849.5 213V179.5H882" stroke="#fff"/><path d="M849 212.5h34V179" stroke="#8c8c8c" stroke-width="2"/>
    <path d="M884 213h34V179" stroke="#fff" stroke-width="2"/><path d="M884.5 213V179.5H917" stroke="#707070" stroke-width="2"/>
    <path d="M919.5 213V179.5H953" stroke="#fff"/><path d="M919 212.5h34V179" stroke="#8c8c8c" stroke-width="2"/>
  </g>
  <circle cx="746" cy="195.5" r="6" fill="#a00000" stroke="#400" stroke-width="0.8"/>
  <path d="M774 184l15 15h-7l4 8-3 2-4-8-5 5z" fill="#f8f890" stroke="#202070" stroke-width="1.5"/>
  <rect x="804.5" y="190.5" width="19" height="16" fill="#fff" stroke="#303080" stroke-width="1.5"/>
  <path d="M807 197h3M812 197h8M807 202h3M812 202h8" stroke="#2040f0" stroke-width="1.8"/>
  <path d="M811 193l5-5h7l3 4-6 2z" fill="#f0c0a0" stroke="#806050" stroke-width="0.8"/><rect x="825" y="186" width="3" height="7" fill="#101070"/>
  <path d="M855 186l4-3 5 2 5-2 4 3 4 2v17l-4 4-17-4z" fill="#40c8f0" stroke="#202060" stroke-width="1.2"/>
  <path d="M856 188l16 3v17l-16-4z" fill="#2a2a2a" stroke="#f0e070" stroke-width="1.5"/>
  <rect x="889" y="184" width="24" height="23" fill="#40c0c8"/><rect x="891" y="186" width="20" height="19" fill="#50d8f8"/>
  <path d="M892 204l5-7 4 3 3-4 6 8z" fill="#505060" stroke="#181850" stroke-width="0.8"/><path d="M895 200l2-3 2 2zM902 199l2-3 2 3z" fill="#fff"/>
  <circle cx="907" cy="191" r="2.5" fill="#f0e000" stroke="#e03000"/>
  <path d="M924 184v22h21z" fill="#20e8e8" stroke="#000" stroke-width="1"/><path d="M929 198v5h6z" fill="#fbe3c3" stroke="#000"/>
  <rect x="924" y="204" width="24" height="5" fill="#404040"/><path d="M926 205v2M929 205v2M932 205v2M935 205v2M938 205v2M941 205v2M944 205v2" stroke="#ccc" stroke-width="0.8"/>
  <path d="M938 199l8-12" stroke="#000" stroke-width="4"/><path d="M938 199l8-12" stroke="#f0e030" stroke-width="2"/><circle cx="947" cy="186" r="2" fill="#c02020"/>
</svg>


<!-- menu -->
<div id="menu" class="a">
  <div class="it" style="top:2px"><span><u>F</u>ormula...</span></div>
  <div class="it sel" style="top:38px"><span>Imag<u>e</u></span><div class="arr"></div></div>
  <div class="sep" style="top:77px"></div>
  <div class="it" style="top:80px"><span><u>M</u>acro</span><div class="arr"></div></div>
  <div class="it" style="top:116px"><span><u>U</u>tility...</span></div>
  <div class="it" style="top:152px"><span><u>C</u>ustomize...</span></div>
  <div class="it" style="top:188px"><span><u>V</u>isualization Filters...</span></div>
  <div class="it" style="top:224px"><span><u>O</u>ptions...</span></div>
  <div class="it" style="top:260px"><span><u>S</u>tandards...</span></div>
  <div class="it" style="top:296px"><span>Co<u>n</u>ferencing</span><div class="arr"></div></div>
  <div class="sep" style="top:335px"></div>
  <div class="it" style="top:338px"><span><u>P</u>ositioning</span><div class="arr"></div></div>
  <div class="it" style="top:374px"><span><u>A</u>nalyze</span><div class="arr"></div></div>
  <div class="it" style="top:410px"><span>Mult<u>i</u> View (2.5 D)</span><div class="arr"></div></div>
  <div class="sep" style="top:449px"></div>
  <div class="it" style="top:452px"><span>Dimension <u>g</u>eneration</span><div class="arr"></div></div>
  <div class="sep" style="top:491px"></div>
  <div class="it dis" style="top:494px"><span>Impo<u>r</u>t a generative view style ...</span></div>
  <div class="sep" style="top:533px"></div>
  <div class="it dis" style="top:536px"><span>Rese<u>t</u> All Defaults</span></div>
  <div class="sep" style="top:575px"></div>
  <div class="it" style="top:578px"><span>Import From Fi<u>l</u>e...</span></div>
  <div class="it" style="top:614px"><span>E<u>x</u>port to Layout View</span></div>
  <div class="sep" style="top:653px"></div>
  <div class="it" style="top:656px"><span>S<u>k</u>etch Analysis</span></div>
</div>
<div id="sub" class="a">
  <div class="it sel" style="top:2px"><span>C<u>a</u>pture...</span></div>
  <div class="it" style="top:38px"><span>Al<u>b</u>um...</span></div>
  <div class="it" style="top:74px"><span><u>V</u>ideo...</span></div>
</div>
<!-- menu icons -->
<svg class="a" style="left:0;top:0;pointer-events:none" width="1057" height="981">
  <text x="292" y="58" font-family="Liberation Serif" font-style="italic" font-size="24" fill="#000">f</text>
  <text x="302" y="60" font-family="Liberation Sans" font-weight="bold" font-size="11" fill="#000">(x)</text>
  <path d="M564 81h23v13h-23z" fill="#1a3cf0" stroke="#000" stroke-width="0.8"/><rect x="568" y="78" width="6" height="3" fill="#1a3cf0" stroke="#000" stroke-width="0.6"/><rect x="574" y="77" width="3" height="2" fill="#f0e000"/>
  <circle cx="575.5" cy="87.5" r="5" fill="#101040" stroke="#40e0f0" stroke-width="1.5"/><rect x="566" y="83" width="2" height="2" fill="#40e0f0"/>
  <path d="M566 113l9 4 9-4v13l-9 6-9-6z" fill="#fff" stroke="#303030" stroke-width="1.2"/><path d="M575 117v15" stroke="#303030"/><path d="M566 126l9 6 9-6v-3l-9 5-9-5z" fill="#e8e800" stroke="#303030" stroke-width="0.8"/>
  <circle cx="568" cy="150" r="3" fill="#2030e0" stroke="#000"/><circle cx="577" cy="150" r="3" fill="#2030e0" stroke="#000"/>
  <rect x="564" y="154" width="17" height="9" fill="#1a3cf0" stroke="#000"/><rect x="566" y="156" width="10" height="4" fill="#000"/><path d="M581 157l6-4v11l-6-4z" fill="#2040f0" stroke="#000" stroke-width="0.8"/><path d="M572 163l-5 6M572 163v6M572 163l5 6" stroke="#000" stroke-width="1.5"/>
  <path d="M293 699h20l4 6v12h-24z" fill="#fff" stroke="#000" stroke-width="1.3"/><path d="M294 710h22" stroke="#000"/>
  <circle cx="301" cy="698" r="7" fill="#a0e0f0" fill-opacity="0.7" stroke="#000" stroke-width="1.5"/><path d="M306 703l10 11" stroke="#1a1aaa" stroke-width="3"/>
</svg>
</body></html>
